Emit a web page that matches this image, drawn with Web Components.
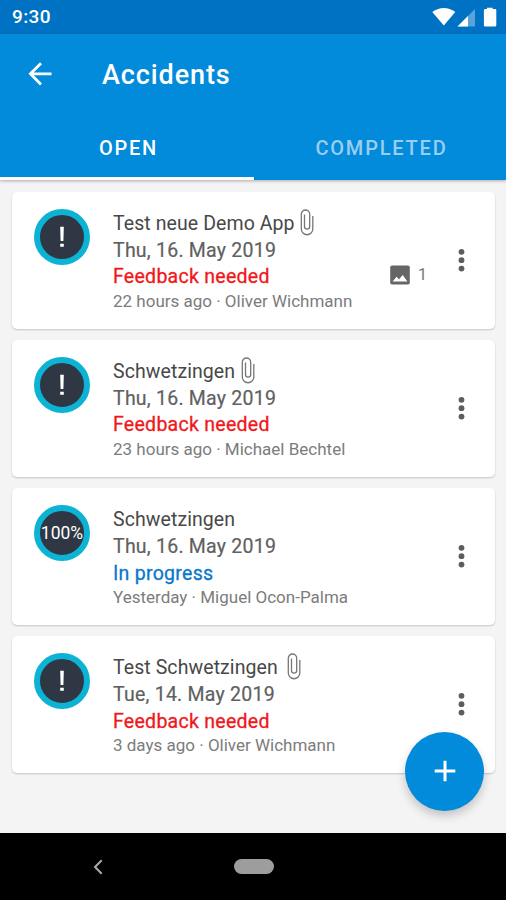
<!DOCTYPE html>
<html lang="en">
<head>
<meta charset="utf-8">
<title>Accidents</title>
<style>
html,body{margin:0;height:100%;overflow:hidden;font-family:Roboto,"Liberation Sans",sans-serif}
</style>
</head>
<body>
<accidents-screen></accidents-screen>
<script>
function define(name, html, init) {
  const tpl = document.createElement('template');
  tpl.innerHTML = html;
  customElements.define(name, class extends HTMLElement {
    constructor() {
      super();
      this.attachShadow({mode: 'open'}).append(tpl.content.cloneNode(true));
    }
    connectedCallback() { if (init) init(this, this.shadowRoot); }
  });
}

define('status-bar', `
<style>
:host{display:flex;align-items:center;justify-content:space-between;height:34px;box-sizing:border-box;padding:0 9px 0 12px;background:#0072c3;color:#fff}
span{font-size:19px;font-weight:500;line-height:34px;letter-spacing:.4px}
svg{display:block}
</style>
<span>9:30</span>
<svg width="66" height="34" viewBox="431 0 66 34" fill="#fff">
<path d="M432.3 12Q443.800 3.800 455.300 12L443.800 25.500Z"/>
<path d="M457.500 26.500L475 9V26.500Z" opacity=".35"/><path d="M457.500 26.500L468 16V26.500Z"/>
<path d="M487 7.700h5.600V9H495a1.300 1.300 0 0 1 1.300 1.300V25.200a1.300 1.300 0 0 1-1.300 1.300H485.200a1.300 1.300 0 0 1-1.300-1.300V10.300A1.300 1.300 0 0 1 485.200 9H487Z"/>
</svg>`);

define('tool-bar', `
<style>
:host{display:flex;align-items:center;height:80px;padding-left:28px;gap:49px;color:#fff}
svg{display:block}
h1{margin:0;font-size:27px;font-weight:500;line-height:32px;letter-spacing:.9px;padding-top:1px}
</style>
<svg width="25" height="24" viewBox="0 0 25 24" fill="none" stroke="#fff" stroke-width="2.800"><path d="M23.500 11.800H2.500M13 1.200L2.400 11.800L13 22.400"/></svg>
<h1><slot></slot></h1>`);

define('tab-item', `
<style>
:host{flex:1;display:flex;align-items:center;justify-content:center;box-sizing:border-box;height:66px;color:rgba(255,255,255,.6);font-size:20px;font-weight:500;letter-spacing:1.800px;border-bottom:3px solid transparent;padding:4px 0 0 3px}
:host([active]){flex:0 0 254px;color:#fff;border-color:#fff}
</style>
<slot></slot>`);

define('app-header', `
<style>
:host{display:block;height:146px;background:#028adb;box-shadow:0 1px 3px rgba(0,0,0,.3);position:relative}
nav{display:flex}
</style>
<slot></slot><nav><slot name="tab"></slot></nav>`);

define('progress-badge', `
<style>
:host{display:flex;align-items:center;justify-content:center;box-sizing:border-box;width:56px;height:56px;border:6px solid #0cb3d4;border-radius:50%;background:#2f3744;color:#fff;font-size:17.500px;flex:none;white-space:nowrap}
</style>
<slot></slot>`);

define('alert-mark', `
<style>:host{display:block}svg{display:block}</style>
<svg width="6" height="22" viewBox="0 0 6 22" fill="#fff"><path d="M1.200 0.800h3.600l-.4 14.200h-2.800zM1.200 17.800h3.600v3h-3.600z"/></svg>`);

define('clip-icon', `
<style>:host{display:inline-block;flex:none}svg{display:block}</style>
<svg width="14" height="27" viewBox="0 0 14 27" fill="none" stroke="#777" stroke-width="1.300"><path d="M9.700 7.500V17.500a2.600 2.600 0 0 1-5.200 0V6M4.500 6V5.500M12.800 7V20a5.700 5.700 0 0 1-11.500 0V5.200a4.200 4.200 0 0 1 8.400 0V9"/></svg>`);

define('more-button', `
<style>:host{display:block}svg{display:block}</style>
<svg width="8" height="24" viewBox="0 0 8 24" fill="#5d5d5d"><circle cx="4.500" cy="3.800" r="2.900"/><circle cx="4.500" cy="12.200" r="2.900"/><circle cx="4.500" cy="20.600" r="2.900"/></svg>`);

define('photo-count', `
<style>:host{display:flex;align-items:center;gap:8px;color:#777;font-size:16px;line-height:20px}svg{display:block}</style>
<svg width="20" height="20" viewBox="0 0 20 20"><path fill="#666" fill-rule="evenodd" d="M2 .5h16a1.800 1.800 0 0 1 1.800 1.800v15.400a1.800 1.800 0 0 1-1.800 1.800H2a1.800 1.800 0 0 1-1.800-1.800V2.300A1.800 1.800 0 0 1 2 .5zM2.600 16.500h14.800l-4.700-6.400-3.600 4.200-2.600-2.500z"/></svg>
<slot></slot>`);

define('accident-card', `
<style>
:host{display:flex;box-sizing:border-box;height:136.500px;padding:17px 30px 0 22px;background:#fff;border-radius:5px;box-shadow:0 1px 2px rgba(0,0,0,.2)}
.text{margin-left:23px;padding-top:2px;flex:1;white-space:nowrap}
.title,.date,.state{font-size:19.500px;line-height:26.700px;height:26.700px}
.title{display:flex;align-items:center;color:#484848;gap:5.500px;letter-spacing:.08px}
::slotted(clip-icon){margin-top:-4px}
.date{color:#606060;letter-spacing:.24px;-webkit-text-stroke:.2px #606060}
.state{color:#f0181b;letter-spacing:.28px;-webkit-text-stroke:.3px currentColor}
:host([status=progress]) .state{color:#0878cb}
.meta{font-size:17px;line-height:21px;color:#7c7c7c}
.side{display:flex;gap:30px;padding-top:39px;height:24px}
.photos{padding-top:17px;height:20px}
</style>
<progress-badge><slot name="badge"></slot></progress-badge>
<div class="text">
<div class="title"><slot></slot><slot name="clip"></slot></div>
<div class="date"></div><div class="state"></div><div class="meta"></div>
</div>
<div class="side"><div class="photos"><slot name="photos"></slot></div><more-button></more-button></div>`,
(host, root) => {
  for (const key of ['date', 'state', 'meta'])
    root.querySelector('.' + key).textContent = host.getAttribute(key);
});

define('add-button', `
<style>
:host{display:flex;align-items:center;justify-content:center;box-sizing:border-box;padding-bottom:1px;position:absolute;left:405px;top:731.500px;width:79px;height:79px;border-radius:50%;background:#028adb;box-shadow:0 5px 10px rgba(0,0,0,.2)}
</style>
<svg width="22" height="22" viewBox="0 0 22 22" stroke="#fff" stroke-width="3"><path d="M11 .7V21.300M.7 11H21.300"/></svg>`);

define('nav-bar', `
<style>
:host{display:grid;grid-template-columns:93px 140.500px 40px 1fr;align-items:center;height:67px;background:#000;box-sizing:border-box}
svg{display:block;grid-column:2}
i{grid-column:3;height:15px;border-radius:8px;background:#9d9d9d}
</style>
<svg width="10" height="16" viewBox="0 0 10 16" fill="none" stroke="#aaa" stroke-width="2"><path d="M8.700 1.300L2 8L8.700 14.700"/></svg><i></i>`);

define('accidents-screen', `
<style>
:host{display:flex;flex-direction:column;position:relative;width:506px;height:900px;background:#f4f4f4;overflow:hidden}
main{flex:1;display:flex;flex-direction:column;gap:11.600px;padding:12px 11px 0 12px}
</style>
<status-bar></status-bar>
<app-header><tool-bar>Accidents</tool-bar><tab-item slot="tab" active>OPEN</tab-item><tab-item slot="tab">COMPLETED</tab-item></app-header>
<main>
<accident-card date="Thu, 16. May 2019" state="Feedback needed" meta="22 hours ago · Oliver Wichmann"><alert-mark slot="badge"></alert-mark>Test neue Demo App<clip-icon slot="clip"></clip-icon><photo-count slot="photos">1</photo-count></accident-card>
<accident-card date="Thu, 16. May 2019" state="Feedback needed" meta="23 hours ago · Michael Bechtel"><alert-mark slot="badge"></alert-mark>Schwetzingen<clip-icon slot="clip"></clip-icon></accident-card>
<accident-card status="progress" date="Thu, 16. May 2019" state="In progress" meta="Yesterday · Miguel Ocon-Palma"><span slot="badge">100%</span>Schwetzingen</accident-card>
<accident-card date="Tue, 14. May 2019" state="Feedback needed" meta="3 days ago · Oliver Wichmann"><alert-mark slot="badge"></alert-mark>Test Schwetzingen<clip-icon slot="clip" style="margin-left:4px"></clip-icon></accident-card>
</main>
<nav-bar></nav-bar>
<add-button></add-button>`);
</script>
</body>
</html>
